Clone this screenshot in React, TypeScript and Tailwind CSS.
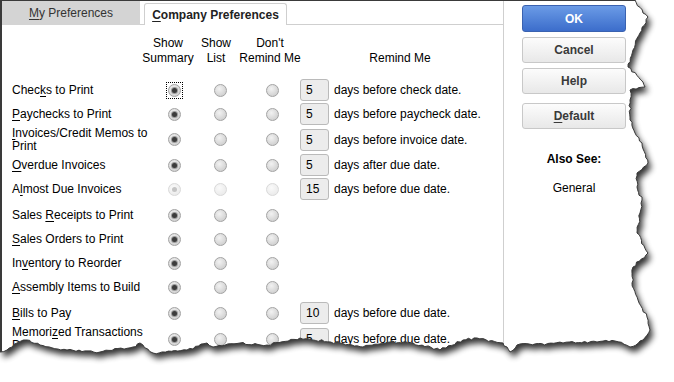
import React from "react";

const U = ({ children }: { children: React.ReactNode }) => (
  <span className="underline underline-offset-[2px] decoration-1">{children}</span>
);

type Row = {
  label: React.ReactNode;
  h: string;
  days?: string;
  text?: string;
  dim?: boolean;
  focus?: boolean;
};

const rows: Row[] = [
  { label: <>Chec<U>k</U>s to Print</>, h: "h-[24px]", days: "5", text: "days before check date.", focus: true },
  { label: <><U>P</U>aychecks to Print</>, h: "h-[24px]", days: "5", text: "days before paycheck date." },
  { label: <><U>I</U>nvoices/Credit Memos to<br />Print</>, h: "h-[27px]", days: "5", text: "days before invoice date." },
  { label: <><U>O</U>verdue Invoices</>, h: "h-[24px]", days: "5", text: "days after due date." },
  { label: <>A<U>l</U>most Due Invoices</>, h: "h-[24px]", days: "15", text: "days before due date.", dim: true },
  { label: <>Sales <U>R</U>eceipts to Print</>, h: "h-[24px] mt-[2px]" },
  { label: <><U>S</U>ales Orders to Print</>, h: "h-[24px]" },
  { label: <>In<U>v</U>entory to Reorder</>, h: "h-[24px]" },
  { label: <><U>A</U>ssembly Items to Build</>, h: "h-[25px]" },
  { label: <><U>B</U>ills to Pay</>, h: "h-[24px] mt-[1px]", days: "10", text: "days before due date." },
  { label: <>Memori<U>z</U>ed Transactions<br />Due</>, h: "h-[28px]", days: "5", text: "days before due date." },
];

function Radio({ on, dim, focus }: { on?: boolean; dim?: boolean; focus?: boolean }) {
  const circle = dim
    ? "border-[#d9d9d9] bg-[radial-gradient(circle_at_40%_35%,#fafafa,#e6e6e6)]"
    : "border-[#a3a3a3] bg-[radial-gradient(circle_at_40%_35%,#f2f2f2,#c6c6c6)]";
  return (
    <span
      className={
        "flex items-center justify-center w-[17px] h-[17px] " +
        (focus ? "border border-dotted border-black" : "")
      }
    >
      <span className={"flex items-center justify-center w-[13px] h-[13px] rounded-full border " + circle}>
        {on && (
          <span
            className={
              "w-[5px] h-[5px] rounded-full " +
              (dim ? "bg-[#c4c4c4]" : "bg-[#3c3c3c] shadow-[0_0_0_1px_#9a9a9a]")
            }
          />
        )}
      </span>
    </span>
  );
}

// torn paper edge
const rightKeys: [number, number][] = [
  [635, 0], [643, 13], [648, 17], [640, 33], [633, 50], [628, 67], [643, 82], [645, 87],
  [630, 90], [630, 100], [630, 117], [635, 133], [642, 143], [648, 163], [637, 173],
  [637, 187], [642, 200], [640, 213], [637, 233], [648, 253], [633, 267], [632, 283],
  [638, 300], [647, 317], [650, 330], [643, 340], [630, 347],
];
const bottomKeys: [number, number][] = [
  [630, 347], [615, 341], [597, 342], [563, 343], [517, 345], [510, 352], [503, 343],
  [477, 338], [463, 340], [440, 350], [413, 343], [390, 342], [363, 347], [340, 343],
  [300, 338], [267, 345], [240, 343], [213, 347], [207, 343], [187, 350], [153, 353],
  [140, 343], [133, 347], [100, 352], [67, 350], [40, 345], [27, 340], [17, 343],
  [7, 350], [0, 352],
];

function jagged(keys: [number, number][], seed: number) {
  let s = seed;
  const rnd = () => {
    s = (s * 9301 + 49297) % 233280;
    return s / 233280 - 0.5;
  };
  const pts: string[] = [];
  for (let i = 0; i < keys.length - 1; i++) {
    const [x1, y1] = keys[i];
    const [x2, y2] = keys[i + 1];
    const len = Math.hypot(x2 - x1, y2 - y1);
    const n = Math.max(1, Math.round(len / 3));
    const nx = -(y2 - y1) / len;
    const ny = (x2 - x1) / len;
    for (let k = 0; k < n; k++) {
      const t = k / n;
      const j = k === 0 ? 0 : rnd() * 2.4;
      pts.push(`${(x1 + (x2 - x1) * t + nx * j).toFixed(1)},${(y1 + (y2 - y1) * t + ny * j).toFixed(1)}`);
    }
  }
  const last = keys[keys.length - 1];
  pts.push(`${last[0]},${last[1]}`);
  return pts;
}

const edgePts = [...jagged(rightKeys, 11), ...jagged(bottomKeys, 37).slice(1)];
const edge = "M" + edgePts.join(" L");
const paper = "M0,0 " + edgePts.map((p) => "L" + p).join(" ") + " Z";
const outside = "M0,0 H674 V382 H0 Z " + paper;

function TornEdge() {
  return (
    <svg className="absolute left-0 top-0 pointer-events-none" width={674} height={382}>
      <defs>
        <clipPath id="outside">
          <path d={outside} clipRule="evenodd" />
        </clipPath>
        <filter id="blur" x="-10%" y="-10%" width="120%" height="120%">
          <feGaussianBlur stdDeviation="3" />
        </filter>
      </defs>
      <path d={outside} fill="#ffffff" fillRule="evenodd" />
      <g clipPath="url(#outside)">
        <path d={paper} fill="#000" opacity={0.8} filter="url(#blur)" transform="translate(3,5)" />
      </g>
      <path d={edge} fill="none" stroke="#3a3a3a" strokeWidth={1} />
    </svg>
  );
}

function Btn({ children, primary, cls }: { children: React.ReactNode; primary?: boolean; cls: string }) {
  return (
    <div
      className={
        "w-[104px] flex items-center justify-center rounded-[3px] border font-bold text-[12px] " +
        cls +
        (primary
          ? " border-[#3a62b0] bg-gradient-to-b from-[#6b9be6] to-[#3c6dcb] text-white"
          : " border-[#c8c8c8] bg-gradient-to-b from-[#fcfcfc] to-[#e8e8e8] text-[#3a3a3a]")
      }
    >
      {children}
    </div>
  );
}

export default function App() {
  return (
    <div className="relative w-[674px] h-[382px] bg-white overflow-hidden font-['Liberation_Sans',Arial,sans-serif] text-[12px] text-black">
      <div className="flex w-[660px] h-[380px] border-t border-l-2 border-[#3a3a3a]">
        {/* preferences panel */}
        <div className="w-[502px] flex flex-col">
          <div className="h-[24px] flex shrink-0">
            <div className="w-[138px] bg-[#d4d4d4] flex items-center justify-center text-[#333]">
              <span>
                <U>M</U>y Preferences
              </span>
            </div>
            <div className="w-[4px] border-b border-[#cfcfcf]" />
            <div className="w-[143px] mt-[2px] border border-b-0 border-[#cfcfcf] rounded-t-[3px] bg-white flex items-center justify-center font-bold text-[#222]">
              <span>
                <U>C</U>ompany Preferences
              </span>
            </div>
            <div className="flex-1 border-b border-r border-[#cfcfcf]" />
          </div>

          <div className="flex-1 border-r border-[#cfcfcf] pl-[10px]">
            {/* column headers */}
            <div className="flex pt-[11px] h-[53px] leading-[15px] text-center">
              <div className="w-[130px]" />
              <div className="w-[52px] flex justify-center whitespace-nowrap">Show<br />Summary</div>
              <div className="w-[44px] flex justify-center whitespace-nowrap">Show<br />List</div>
              <div className="w-[64px] flex justify-center whitespace-nowrap">Don't<br />Remind Me</div>
              <div className="w-[196px] flex justify-center items-end h-[30px] whitespace-nowrap">Remind Me</div>
            </div>

            {rows.map((r, i) => (
              <div key={i} className={"flex items-center " + r.h}>
                <div className="w-[140px] whitespace-nowrap leading-[13px]">{r.label}</div>
                <div className="w-[44px] flex justify-center">
                  <Radio on dim={r.dim} focus={r.focus} />
                </div>
                <div className="w-[48px] flex justify-center">
                  <Radio dim={r.dim} />
                </div>
                <div className="w-[56px] flex justify-center">
                  <Radio dim={r.dim} />
                </div>
                {r.days && (
                  <div className="flex items-center">
                    <span className="w-[29px] h-[22px] border border-[#bababa] rounded-[3px] bg-[#ececec] pl-[5px] flex items-center">
                      {r.days}
                    </span>
                    <span className="ml-[5px] whitespace-nowrap">{r.text}</span>
                  </div>
                )}
              </div>
            ))}
          </div>
        </div>

        {/* buttons */}
        <div className="flex-1 flex flex-col items-start pl-[18px] pt-[4px]">
          <Btn primary cls="h-[27px]">OK</Btn>
          <Btn cls="h-[26px] mt-[5px]">Cancel</Btn>
          <Btn cls="h-[26px] mt-[5px]">Help</Btn>
          <Btn cls="h-[26px] mt-[9px]">
            <span>
              <U>D</U>efault
            </span>
          </Btn>
          <div className="w-[104px] text-center font-bold mt-[21px]">Also See:</div>
          <div className="w-[104px] text-center mt-[11px]">General</div>
        </div>
      </div>
      <TornEdge />
    </div>
  );
}
